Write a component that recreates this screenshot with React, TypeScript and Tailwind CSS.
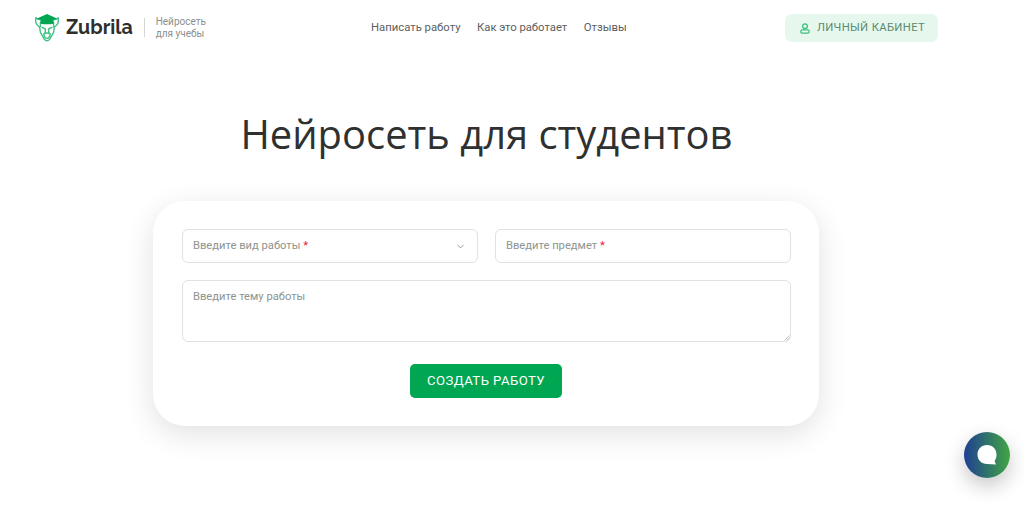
import React from "react";
import { ChevronDown } from "lucide-react";

function Logo() {
  return (
    <svg width="24" height="28" viewBox="0 0 24 28" fill="none">
      <g stroke="#3cc285" strokeWidth="1.4" strokeLinejoin="round" strokeLinecap="round">
        <path d="M5 5.5 C3.2 5.6 1.6 4.8 0.9 3.6 C0.2 7 0.8 11 4.6 12.8 L5.4 18.4 L9.4 25.4 C11 27.2 13 27.2 14.6 25.4 L18.6 18.4 L19.4 12.8 C23.2 11 23.8 7 23.1 3.6 C22.4 4.8 20.8 5.6 19 5.5" />
        <path d="M5.4 8.4 L5.4 12.6 M18.6 8.4 L18.6 12.6" />
        <path d="M7 13.4 L10.4 15 L10.2 19 M17 13.4 L13.6 15 L13.8 19" />
        <path d="M8.6 20 C10.2 18.6 13.8 18.6 15.4 20 L14 23.6 C13 24.6 11 24.6 10 23.6 Z" />
      </g>
      <path d="M12 0 L22 4.4 L18.6 6 L18.6 9.4 C15 10.6 9 10.6 5.4 9.4 L5.4 6 L2 4.4 Z" fill="#00a651" />
    </svg>
  );
}

export default function App() {
  return (
    <div className="min-h-[527px] w-full overflow-hidden bg-white font-['Roboto',sans-serif] relative">
      <div className="w-[973px]">
        <header className="h-[55px] flex items-center pl-[35px] pr-[35px]">
          <div className="flex items-center w-[336px]">
            <Logo />
            <span className="ml-[7px] font-['Raleway','Lato',sans-serif] font-bold text-[19.6px] leading-none text-[#2e2e2e]">Zubrila</span>
            <span className="ml-[11px] h-[19px] w-px bg-[#d4d4d4]" />
            <span className="ml-[11px] text-[10px] leading-[12px] text-[#8b8f8d]">
              Нейросеть<br />для учебы
            </span>
          </div>
          <nav className="flex items-center gap-[16.5px] pt-[2px] text-[11.3px] text-[#5c605e]">
            <span>Написать работу</span>
            <span>Как это работает</span>
            <span>Отзывы</span>
          </nav>
          <button className="ml-auto h-[28px] w-[153px] rounded-[7px] bg-[#e6f8ee] flex items-center pl-[15px] gap-[7px] text-[11.3px] tracking-[0.33px] text-[#5a8a70]">
            <svg width="10" height="11" viewBox="0 0 11 12" fill="none" stroke="#3cbf7d" strokeWidth="1.4" className="mt-[2px]">
              <circle cx="5.5" cy="3.4" r="2.6" />
              <rect x="0.9" y="7.6" width="9.2" height="3.6" rx="1.6" />
            </svg>
            <span className="pt-[1px]">ЛИЧНЫЙ КАБИНЕТ</span>
          </button>
        </header>

        <h1 className="mt-[51px] text-center font-['Open_Sans','Inter',sans-serif] text-[39.9px] leading-[56px] text-[#2f3130]">
          Нейросеть для студентов
        </h1>

        <form className="mt-[39px] ml-[153px] w-[666px] h-[225px] rounded-[32px] bg-white shadow-[0_8px_30px_rgba(0,0,0,0.12)] pl-[29px] pr-[28px] pt-[28px]">
          <div className="flex justify-between">
            <div className="w-[296px] h-[34px] rounded-[6px] border border-[#dfe3e1] flex items-center justify-between pl-[10px] pr-[11px] text-[11.2px] text-[#8d9490]">
              <span>Введите вид работы <span className="text-[#f0142f]">*</span></span>
              <ChevronDown size={11} strokeWidth={1.8} className="text-[#7d8581]" />
            </div>
            <div className="w-[296px] h-[34px] rounded-[6px] border border-[#dfe3e1] flex items-center pl-[10px] text-[11.2px] text-[#8d9490]">
              <span>Введите предмет <span className="text-[#f0142f]">*</span></span>
            </div>
          </div>
          <div className="relative mt-[17px]">
            <textarea
              className="block w-full h-[62px] resize-none rounded-[6px] border border-[#dfe3e1] px-[10px] py-[9px] text-[11.2px] leading-[14px] outline-none placeholder:text-[#8d9490]"
              placeholder="Введите тему работы"
            />
            <svg className="absolute right-[1px] bottom-[1px]" width="6" height="6" viewBox="0 0 6 6" stroke="#a9adab" strokeWidth="0.8">
              <path d="M0.5 5.5 L5.5 0.5 M3 5.5 L5.5 3" />
            </svg>
          </div>
          <div className="mt-[22px] flex justify-center pr-[1px]">
            <button type="button" className="h-[34px] w-[152px] rounded-[5px] bg-[#00a651] text-[13.2px] tracking-[0.4px] text-white">
              СОЗДАТЬ РАБОТУ
            </button>
          </div>
        </form>
      </div>

      <div className="absolute left-[964px] top-[432px] w-[46px] h-[46px] rounded-full bg-[linear-gradient(90deg,#1f3f93,#41a643)] shadow-[0_8px_20px_rgba(0,0,0,0.22)] flex items-center justify-center">
        <svg width="22" height="22" viewBox="0 0 22 22">
          <path d="M11 1 C5.5 1 1.5 5 1.5 10.5 C1.5 16 5.5 20 11 20 L20 20.5 L18.6 17 C20 15.3 20.5 13 20.5 10.5 C20.5 5 16.5 1 11 1 Z" fill="#fff" />
        </svg>
      </div>
    </div>
  );
}
